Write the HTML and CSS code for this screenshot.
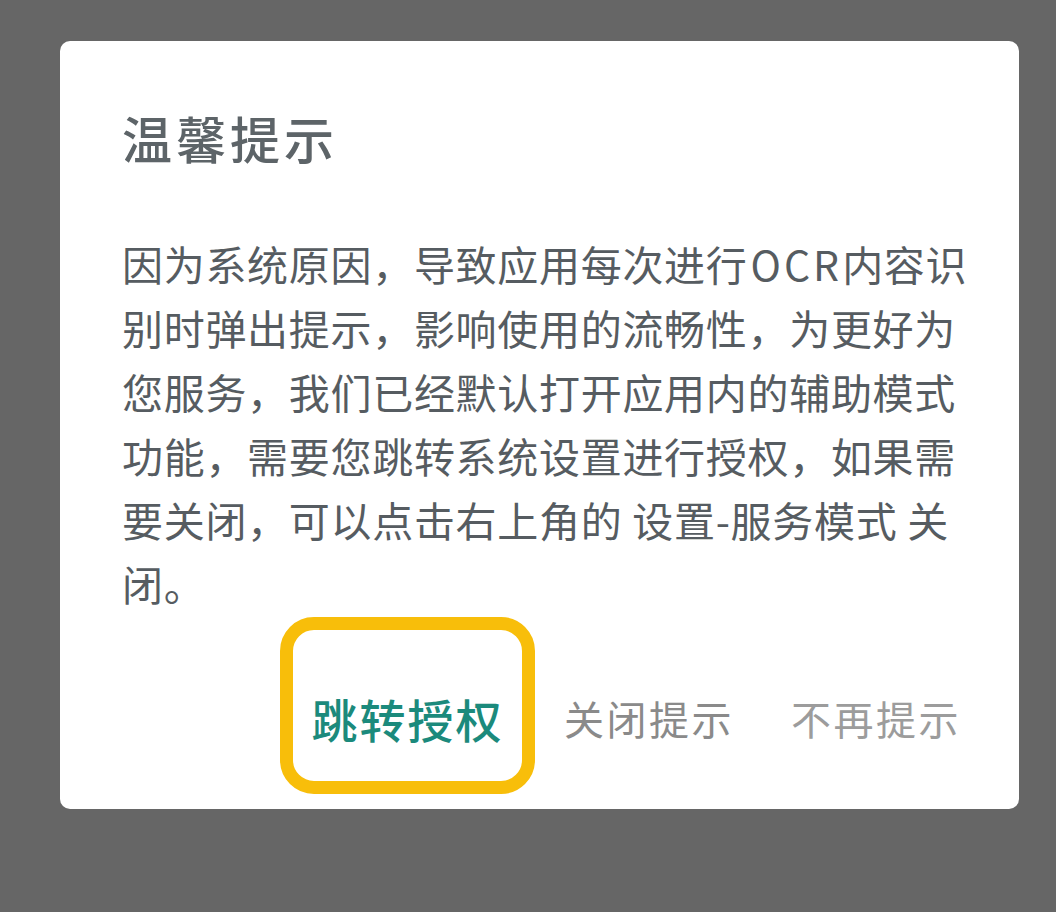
FILE: index.html
```html
<!DOCTYPE html>
<html lang="zh-CN">
<head>
<meta charset="utf-8">
<title>温馨提示</title>
<link rel="stylesheet" href="styles.css">
</head>
<body>
<div class="dialog">
  <h1 class="title">温馨提示</h1>
  <p class="message">因为系统原因，导致应用每次进行<span class="latin">OCR</span>内容识<br>别时弹出提示，影响使用的流畅性，为更好为<br>您服务，我们已经默认打开应用内的辅助模式<br>功能，需要您跳转系统设置进行授权，如果需<br>要关闭，可以点击右上角的 设置-服务模式 关<br>闭。</p>
  <div class="actions">
    <div class="btn-highlight"><span class="btn btn-primary">跳转授权</span></div>
    <span class="btn btn-close">关闭提示</span>
    <span class="btn btn-never">不再提示</span>
  </div>
</div>
</body>
</html>
```

FILE: styles.css
```css
html, body {
  margin: 0;
  padding: 0;
}
body {
  background: #666666;
  width: 1056px;
  height: 912px;
  overflow: hidden;
  font-family: "Noto Sans CJK SC", "Noto Sans", sans-serif;
  padding-top: 41px;
  box-sizing: border-box;
}
.dialog {
  margin-left: 60px;
  width: 959px;
  height: 768px;
  background: #ffffff;
  border-radius: 10px;
  box-sizing: border-box;
  padding: 66px 0 0 62px;
}
.title {
  margin: 0;
  font-size: 50px;
  line-height: 60px;
  font-weight: 500;
  letter-spacing: 4px;
  color: #5d6468;
}
.message {
  margin: 64px 0 0 0;
  font-family: "Noto Sans CJK SC", sans-serif;
  font-size: 41px;
  line-height: 64px;
  letter-spacing: 0.7px;
  color: #565c61;
  font-weight: 400;
  white-space: nowrap;
}
.latin {
  letter-spacing: 3px;
  margin-left: 3px;
}
.actions {
  display: flex;
  align-items: flex-start;
  margin-left: 158px;
  margin-top: 2px;
}
.btn-highlight {
  width: 255px;
  height: 177px;
  box-sizing: border-box;
  border: 13px solid #f8be0a;
  border-radius: 34px;
  display: flex;
  justify-content: center;
  padding-top: 63px;
}
.btn {
  display: block;
  line-height: 50px;
  white-space: nowrap;
}
.btn-primary {
  font-size: 46px;
  letter-spacing: 2px;
  color: #1b8a7c;
  font-weight: 500;
}
.btn-close {
  margin-top: 76px;
  margin-left: 29px;
  font-size: 40px;
  letter-spacing: 2.5px;
  color: #8a8a8a;
}
.btn-never {
  margin-top: 76px;
  margin-left: 57px;
  font-size: 40px;
  letter-spacing: 2.5px;
  color: #9c9c9c;
}
```
